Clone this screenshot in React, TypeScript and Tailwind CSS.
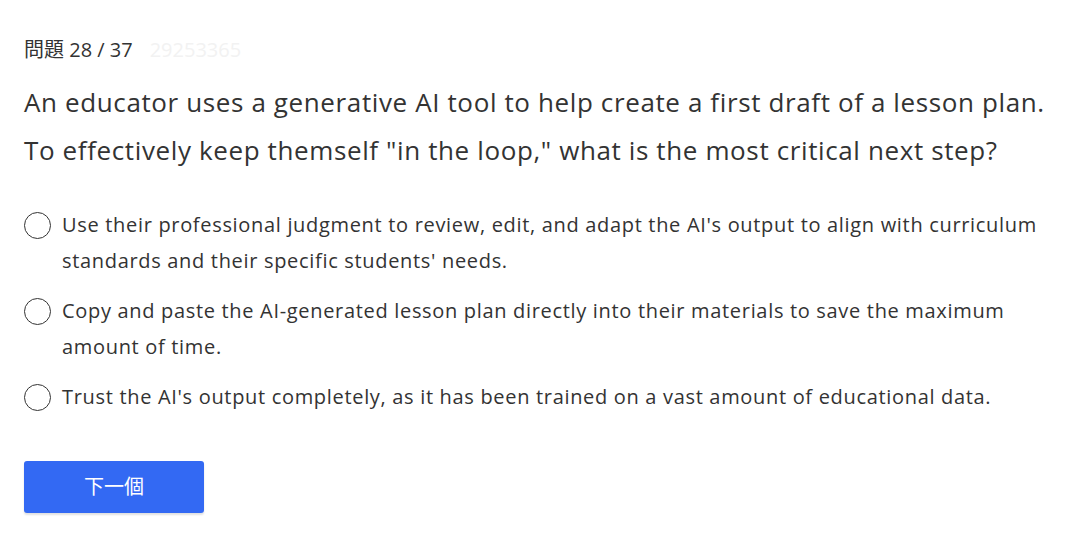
import React from "react";

const options = [
  "Use their professional judgment to review, edit, and adapt the AI's output to align with curriculum standards and their specific students' needs.",
  "Copy and paste the AI-generated lesson plan directly into their materials to save the maximum amount of time.",
  "Trust the AI's output completely, as it has been trained on a vast amount of educational data.",
];

export default function App() {
  return (
    <div
      className="w-[1075px] h-[550px] bg-white text-[#333333] px-[24px] pt-[36px]"
      style={{ fontFamily: '"Open Sans", "Noto Sans CJK TC", sans-serif' }}
    >
      <div className="flex items-center h-[28px] text-[20px]">
        <span>問題 28 / 37</span>
        <span className="ml-[17px] text-[#f2f2f2]">29253365</span>
      </div>
      <div className="mt-[14px] text-[26px] leading-[48px] tracking-[0.62px] text-[#333333]">
        An educator uses a generative AI tool to help create a first draft of a lesson plan. To effectively keep themself "in the loop," what is the most critical next step?
      </div>
      <div className="mt-[33px] flex flex-col gap-[14px]">
        {options.map((o) => (
          <label key={o} className="flex items-start">
            <span className="mt-[5px] w-[27px] h-[27px] shrink-0 rounded-full border-[1.5px] border-[#333333]" />
            <span className="ml-[11px] text-[20px] leading-[36px] tracking-[0.68px]">{o}</span>
          </label>
        ))}
      </div>
      <button className="mt-[46px] w-[180px] h-[52px] rounded-[3px] bg-[#3369f3] text-white text-[20px] shadow-[0_2px_2px_rgba(0,0,0,0.12)]">
        下一個
      </button>
    </div>
  );
}
